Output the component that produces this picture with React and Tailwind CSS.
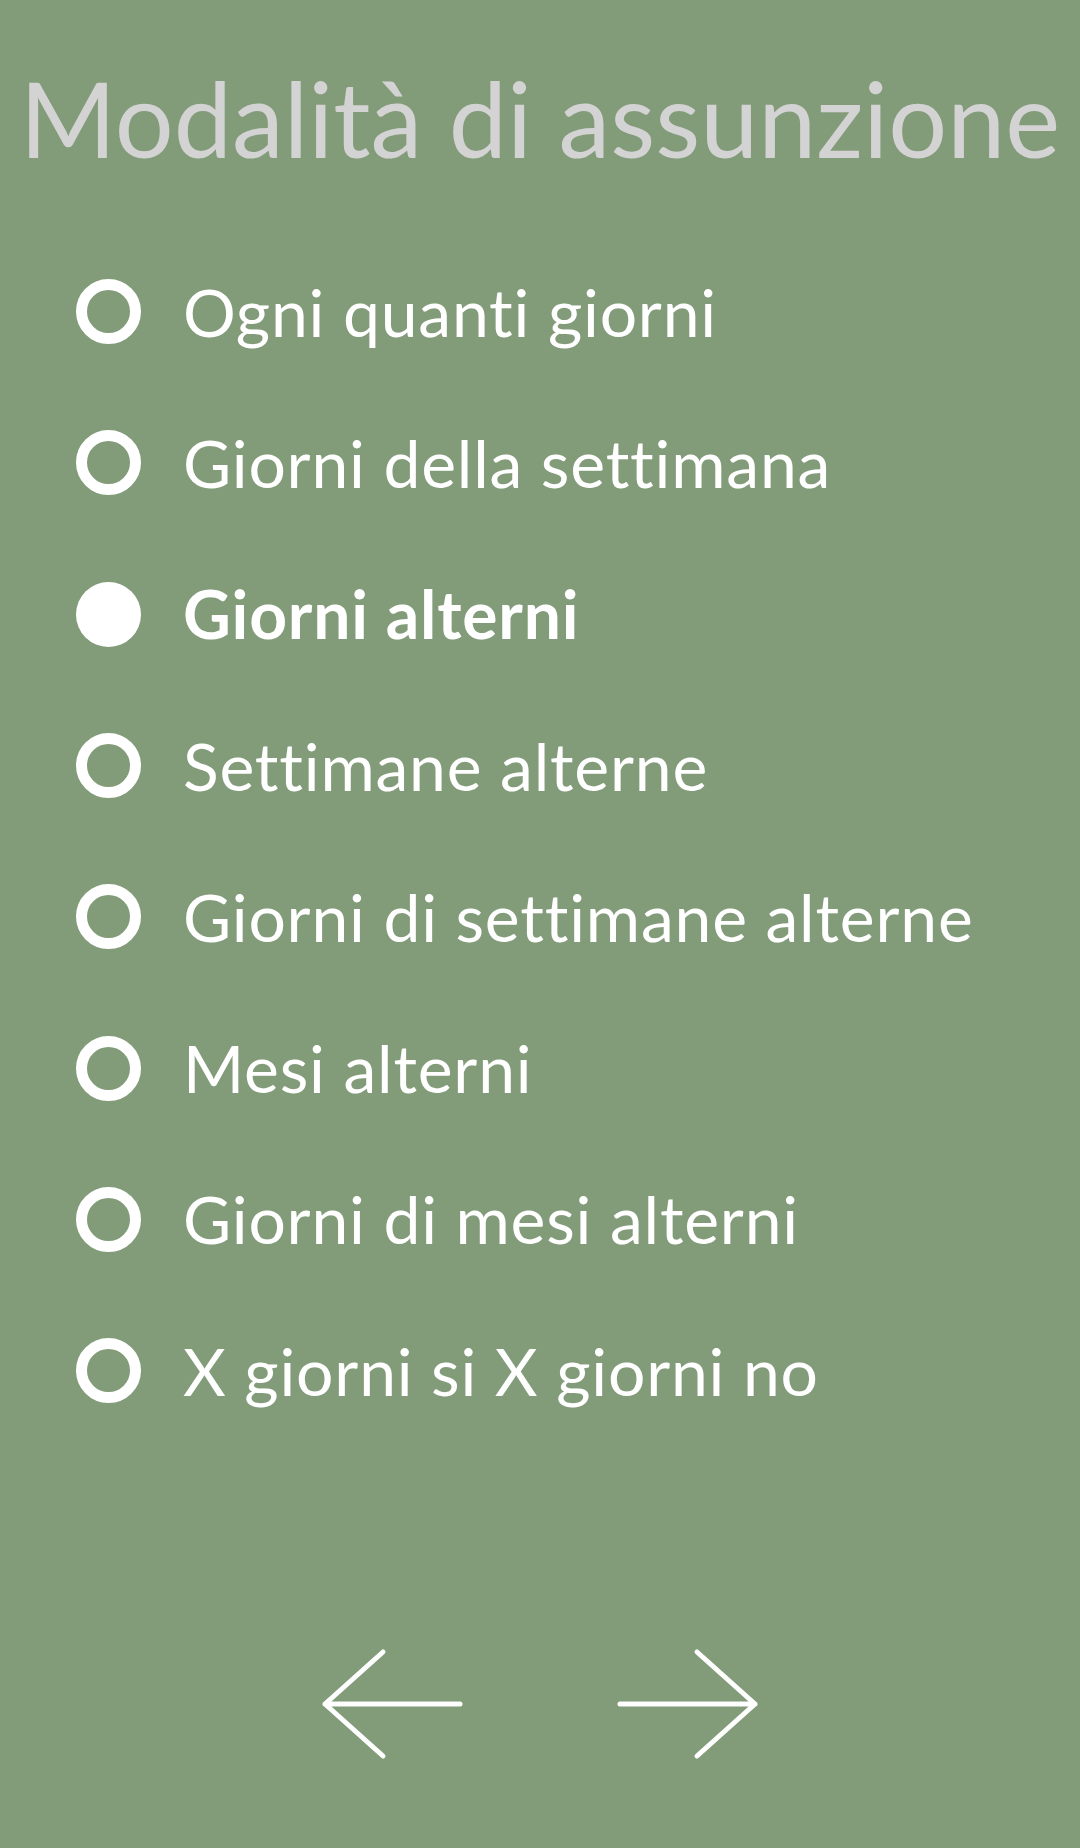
import React from "react";

const items = [
  "Ogni quanti giorni",
  "Giorni della settimana",
  "Giorni alterni",
  "Settimane alterne",
  "Giorni di settimane alterne",
  "Mesi alterni",
  "Giorni di mesi alterni",
  "X giorni si X giorni no",
];

export default function App() {
  const selected = 2;
  return (
    <div className="w-[1080px] h-[1848px] bg-[#829b79] flex flex-col overflow-hidden [font-variant-ligatures:none]" style={{ fontFamily: "Lato, 'Open Sans', sans-serif" }}>
      <div className="h-[236px] flex justify-center">
        <h1 className="mt-[62px] text-[104px] leading-[112px] text-[#d3d3d3] font-normal whitespace-nowrap">Modalità di assunzione</h1>
      </div>
      <div className="flex flex-col">
        {items.map((t, i) => (
          <div key={t} className="h-[151.3px] flex items-center pl-[76px]">
            {i === selected ? (
              <div className="w-[65px] h-[65px] rounded-full bg-white shrink-0" />
            ) : (
              <div className="w-[65px] h-[65px] rounded-full border-[11px] border-white shrink-0" />
            )}
            <span className={`ml-[42px] text-[66px] leading-none tracking-[0.8px] text-white whitespace-nowrap ${i === selected ? "font-bold" : "font-normal"}`}>{t}</span>
          </div>
        ))}
      </div>
      <div className="mt-[202px] flex justify-center gap-[150px]">
        <svg width="144" height="112" viewBox="0 0 144 112" fill="none" stroke="white" strokeWidth="5" strokeLinecap="round" strokeLinejoin="round">
          <path d="M139 56H4M62 4L4 56L62 108" />
        </svg>
        <svg width="144" height="112" viewBox="0 0 144 112" fill="none" stroke="white" strokeWidth="5" strokeLinecap="round" strokeLinejoin="round">
          <path d="M5 56H140M82 4L140 56L82 108" />
        </svg>
      </div>
    </div>
  );
}
